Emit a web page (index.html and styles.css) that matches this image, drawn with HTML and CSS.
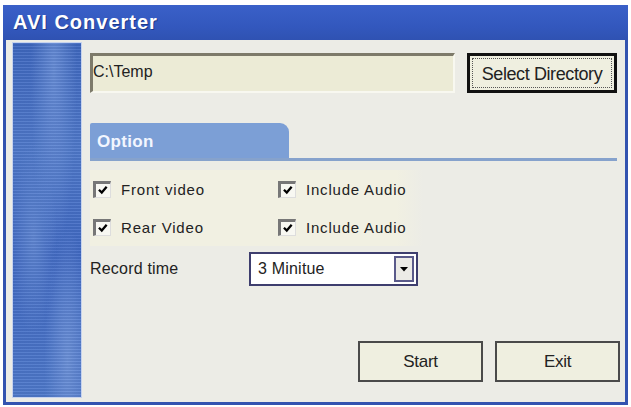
FILE: index.html
```html
<!DOCTYPE html>
<html lang="en">
<head>
    <meta charset="UTF-8">
    <title>AVI Converter</title>
    <link rel="stylesheet" href="styles.css">
</head>
<body>
    <div class="window">
        <div class="titlebar">AVI Converter</div>
        <div class="body">
            <div class="side"></div>
            <div class="main">
                <div class="path-row">
                    <div class="path">C:\Temp</div>
                    <button class="btn btn-default"><span>Select Directory</span></button>
                </div>

                <div class="tabs">
                    <div class="tab">Option</div>
                </div>

                <div class="options">
                    <label class="check"><span class="box"><svg viewBox="0 0 16 16"><path d="M3 7l3.5 3.5 6-7" /></svg></span>Front video</label>
                    <label class="check"><span class="box"><svg viewBox="0 0 16 16"><path d="M3 7l3.5 3.5 6-7" /></svg></span>Include Audio</label>
                    <label class="check"><span class="box"><svg viewBox="0 0 16 16"><path d="M3 7l3.5 3.5 6-7" /></svg></span>Rear Video</label>
                    <label class="check"><span class="box"><svg viewBox="0 0 16 16"><path d="M3 7l3.5 3.5 6-7" /></svg></span>Include Audio</label>
                </div>

                <div class="record-row">
                    <span class="record-label">Record time</span>
                    <div class="combo">
                        <span class="combo-value">3 Minitue</span>
                        <span class="combo-arrow"><svg viewBox="0 0 10 6"><path d="M1 1h8L5 5.5z" /></svg></span>
                    </div>
                </div>

                <div class="actions">
                    <button class="btn">Start</button>
                    <button class="btn">Exit</button>
                </div>
            </div>
        </div>
    </div>
</body>
</html>
```

FILE: styles.css
```css
/* AVI Converter dialog, XP style */

body {
    margin: 0;
    background: #fff;
    font-family: 'Liberation Sans', Arial, sans-serif;
}

.window {
    width: 619px;
    margin: 5px 0 0 3px;
    border: 3px solid #3353b0;
    border-top: 0;
    background: #ecece6;
}

.titlebar {
    height: 35px;
    margin: 0 -3px;
    padding-left: 10px;
    background: linear-gradient(to bottom, #3a60c8, #3358be 60%, #2f52b2);
    color: #fff;
    font-size: 20px;
    font-weight: bold;
    letter-spacing: 1px;
    line-height: 35px;
    text-shadow: 1px 1px 0 #1c3a8a;
}

.body {
    display: flex;
    height: 362px;
    padding: 2px 0 4px 6px;
    box-sizing: border-box;
}

.side {
    width: 70px;
    flex: none;
    margin-right: 8px;
    border: 1px solid #c7d3ee;
    box-sizing: border-box;
    background:
        repeating-linear-gradient(to bottom, rgba(255, 255, 255, 0.08) 0 1px, rgba(0, 0, 0, 0.06) 1px 3px),
        radial-gradient(ellipse at 60% 8%, #668cd6 0, transparent 40%),
        radial-gradient(ellipse at 30% 55%, #5f86d2 0, transparent 35%),
        radial-gradient(ellipse at 80% 90%, #6b90d8 0, transparent 30%),
        linear-gradient(to bottom, #3f68c0, #4f79cb 30%, #4069c4 60%, #4e79cb);
}

.main {
    flex: 1;
    padding: 11px 5px 0 0;
}

.path-row {
    display: flex;
    gap: 12px;
    height: 40px;
}

.path {
    width: 365px;
    box-sizing: border-box;
    padding: 7px 0 0 0;
    background: #ecebd6;
    border-top: 3px solid #7d7a6a;
    border-left: 3px solid #7d7a6a;
    border-right: 2px solid #f8f8f0;
    border-bottom: 2px solid #f8f8f0;
    font-size: 16px;
    color: #222;
}

.btn {
    font-family: inherit;
    font-size: 17px;
    color: #222;
    background: #efefe0;
    border: 2px solid #4a4a4a;
    padding: 0;
    cursor: pointer;
}

.btn-default {
    width: 150px;
    border: 3px solid #111;
    padding: 2px;
}

.btn-default span {
    display: block;
    height: 100%;
    line-height: 30px;
    border: 1px dotted #555;
    box-sizing: border-box;
    font-size: 18px;
    letter-spacing: -0.4px;
}

.tabs {
    display: flex;
    margin: 30px 3px 0 0;
    border-bottom: 3px solid #86a2cc;
}

.tab {
    width: 199px;
    height: 35px;
    padding-left: 7px;
    box-sizing: border-box;
    background: #7c9fd6;
    border-radius: 2px 9px 0 0;
    color: #f2f6ff;
    font-size: 17px;
    font-weight: bold;
    letter-spacing: 0.3px;
    line-height: 37px;
}

.options {
    display: grid;
    grid-template-columns: 185px 140px;
    grid-auto-rows: 38px;
    margin-top: 9px;
    padding-left: 3px;
    width: 330px;
    background: linear-gradient(to right, #f1f0e2, #f1f0e2 92%, #ecece6);
}

.check {
    display: flex;
    align-items: center;
    gap: 10px;
    font-size: 15px;
    letter-spacing: 0.8px;
    color: #222;
}

.box {
    width: 18px;
    height: 17px;
    box-sizing: border-box;
    border-top: 3px solid #777;
    border-left: 3px solid #777;
    border-right: 1px solid #ddd;
    border-bottom: 1px solid #ddd;
    background: #f8f8f2;
}

.box svg {
    display: block;
    width: 14px;
    height: 13px;
}

.box path {
    fill: none;
    stroke: #000;
    stroke-width: 2.8;
}

.record-row {
    display: flex;
    align-items: center;
    margin-top: 6px;
    height: 34px;
}

.record-label {
    width: 159px;
    font-size: 16px;
    letter-spacing: 0.2px;
    color: #222;
}

.combo {
    display: flex;
    align-items: center;
    width: 169px;
    height: 34px;
    box-sizing: border-box;
    border: 2px solid #3e3e6e;
    background: #fff;
}

.combo-value {
    flex: 1;
    padding-left: 7px;
    font-size: 16px;
    letter-spacing: 0.2px;
    color: #222;
}

.combo-arrow {
    display: flex;
    align-items: center;
    justify-content: center;
    width: 20px;
    height: 26px;
    margin-right: 2px;
    box-sizing: border-box;
    border: 2px solid #5a5a8a;
    background: #ecebe6;
}

.combo-arrow svg {
    width: 10px;
    height: 6px;
}

.actions {
    display: flex;
    justify-content: flex-end;
    gap: 12px;
    margin-top: 55px;
}

.actions .btn {
    width: 125px;
    height: 41px;
    letter-spacing: -0.3px;
}
```
